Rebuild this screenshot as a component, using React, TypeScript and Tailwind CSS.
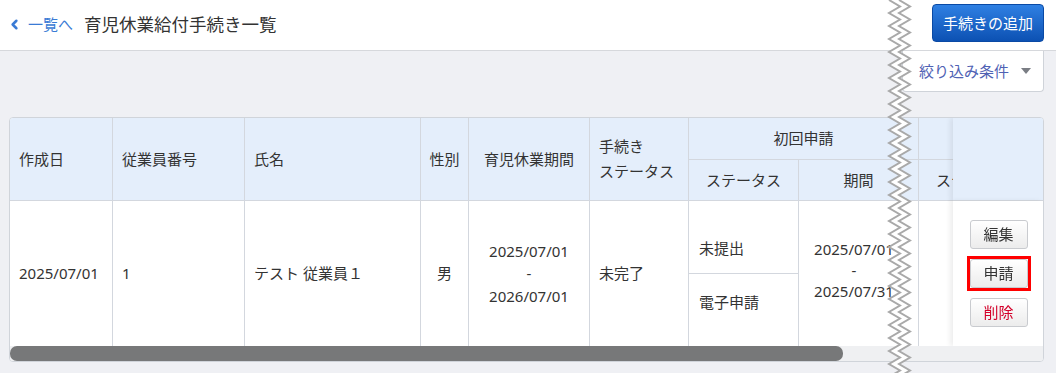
import React from "react";
import { ChevronLeft } from "lucide-react";

function Tear() {
  const h = 390;
  const half = 6.5;
  const left: string[] = [];
  const right: string[] = [];
  for (let i = 0; i * half <= h; i++) {
    const y = i * half;
    const x = i % 2 === 0 ? 3 : 14;
    left.push(`${x},${y}`);
    right.push(`${x + 10},${y}`);
  }
  const poly = [...left, ...[...right].reverse()].join(" ");
  return (
    <svg className="absolute top-0 left-[886px] z-50" width="30" height="373" viewBox="0 0 30 373">
      <polygon points={poly} fill="#ffffff" />
      <polyline points={left.join(" ")} fill="none" stroke="#a9a9a9" strokeWidth="2" />
      <polyline points={right.join(" ")} fill="none" stroke="#a9a9a9" strokeWidth="2" />
    </svg>
  );
}

const th = "font-normal text-[15px] text-[#333] bg-[#e4eefb] border-r border-b border-[#d3d7de] whitespace-nowrap overflow-hidden";
const td = "font-normal text-[15px] text-[#333] bg-white border-r border-[#d3d7de] align-middle whitespace-nowrap overflow-hidden";
const btn =
  "w-[58px] h-[29px] rounded-[3px] border border-[#c9cbcf] bg-gradient-to-b from-white to-[#ececec] text-[15px] leading-none flex items-center justify-center";

export default function App() {
  return (
    <div className="relative w-[1056px] h-[373px] overflow-hidden bg-[#eff0f4] font-['Noto_Sans','Noto_Sans_CJK_JP',sans-serif] text-[#333]">
      {/* header */}
      <div className="h-[51px] bg-white border-b border-[#d6d8dc] flex items-start justify-between">
        <div className="h-[49px] flex items-center pl-[7px]">
          <ChevronLeft size={15} strokeWidth={4} className="text-[#3a7bd5]" />
          <span className="ml-[6px] text-[15px] text-[#3a7bd5]">一覧へ</span>
          <span className="ml-[11px] text-[17.5px] text-[#333]">育児休業給付手続き一覧</span>
        </div>
        <button className="mt-[4px] mr-[12px] w-[112px] h-[38px] rounded-[4px] border border-[#0a4aa5] bg-gradient-to-b from-[#2f80e3] to-[#0c51b3] text-white text-[15px] flex items-center justify-center">
          手続きの追加
        </button>
      </div>

      {/* filter */}
      <div className="flex justify-end">
        <div className="mr-[12px] w-[142px] h-[41px] bg-white border border-t-0 border-[#cfd3d9] rounded-b-[4px] flex items-center pl-[16px]">
          <span className="text-[15px] text-[#4f62b4]">絞り込み条件</span>
          <svg className="ml-[12px]" width="10" height="6" viewBox="0 0 10 6">
            <polygon points="0,0 10,0 5,6" fill="#7a7d84" />
          </svg>
        </div>
      </div>

      {/* card */}
      <div className="mt-[25px] ml-[9px] mr-[12px] border border-[#d0d4da] rounded-[4px] overflow-hidden bg-white">
        <div className="relative overflow-hidden">
          <table className="table-fixed border-separate border-spacing-0 w-[1229px]">
            <colgroup>
              <col className="w-[103px]" />
              <col className="w-[132px]" />
              <col className="w-[176px]" />
              <col className="w-[48px]" />
              <col className="w-[121px]" />
              <col className="w-[99px]" />
              <col className="w-[110px]" />
              <col className="w-[120px]" />
              <col className="w-[110px]" />
              <col className="w-[120px]" />
              <col className="w-[90px]" />
            </colgroup>
            <thead>
              <tr className="h-[42px]">
                <th rowSpan={2} className={th + " text-left pl-[9px]"}>作成日</th>
                <th rowSpan={2} className={th + " text-left pl-[9px]"}>従業員番号</th>
                <th rowSpan={2} className={th + " text-left pl-[9px]"}>氏名</th>
                <th rowSpan={2} className={th + " text-center"}>性別</th>
                <th rowSpan={2} className={th + " text-center"}>育児休業期間</th>
                <th rowSpan={2} className={th + " text-left pl-[9px] leading-[25px]"}>
                  手続き
                  <br />
                  ステータス
                </th>
                <th colSpan={2} className={th + " text-center"}>初回申請</th>
                <th colSpan={2} className={th}></th>
                <th
                  rowSpan={2}
                  className="sticky right-0 z-10 bg-[#e4eefb] border-b border-[#d3d7de] shadow-[-3px_0_5px_rgba(0,0,0,0.07)]"
                ></th>
              </tr>
              <tr className="h-[41px]">
                <th className={th + " text-center"}>ステータス</th>
                <th className={th + " text-center"}>期間</th>
                <th className={th + " text-left pl-[17px]"}>ステータス</th>
                <th className={th}></th>
              </tr>
            </thead>
            <tbody>
              <tr className="h-[73px]">
                <td rowSpan={2} className={td + " pl-[9px]"}>2025/07/01</td>
                <td rowSpan={2} className={td + " pl-[9px]"}>1</td>
                <td rowSpan={2} className={td + " pl-[9px]"}>テスト 従業員１</td>
                <td rowSpan={2} className={td + " text-center"}>男</td>
                <td rowSpan={2} className={td + " text-center leading-[22.5px]"}>
                  <div>2025/07/01</div>
                  <div>-</div>
                  <div>2026/07/01</div>
                </td>
                <td rowSpan={2} className={td + " pl-[9px]"}>未完了</td>
                <td className={td + " border-b pl-[10px] pt-[22px]"}>未提出</td>
                <td rowSpan={2} className={td + " text-center leading-[21px] pb-[7px] pr-[9px]"}>
                  <div>2025/07/01</div>
                  <div>-</div>
                  <div>2025/07/31</div>
                </td>
                <td rowSpan={2} className={td}></td>
                <td rowSpan={2} className={td}></td>
                <td
                  rowSpan={2}
                  className="sticky right-0 z-10 bg-white shadow-[-3px_0_5px_rgba(0,0,0,0.07)] align-middle"
                >
                  <div className="flex flex-col items-center pl-[1px]">
                    <button className={btn + " text-[#333]"}>編集</button>
                    <div className="mt-[7px] border-[3px] border-[#ff0000] p-0">
                      <button className={btn + " text-[#333]"}>申請</button>
                    </div>
                    <button className={btn + " mt-[7px] text-[#d4002a]"}>削除</button>
                  </div>
                </td>
              </tr>
              <tr className="h-[72px]">
                <td className={td + " pl-[10px] pb-[16px]"}>電子申請</td>
              </tr>
            </tbody>
          </table>
        </div>
        {/* scrollbar */}
        <div className="h-[15px] bg-[#eff0f2]">
          <div className="w-[833px] h-[15px] rounded-[7px] bg-[#777879]" />
        </div>
      </div>

      <Tear />
    </div>
  );
}
